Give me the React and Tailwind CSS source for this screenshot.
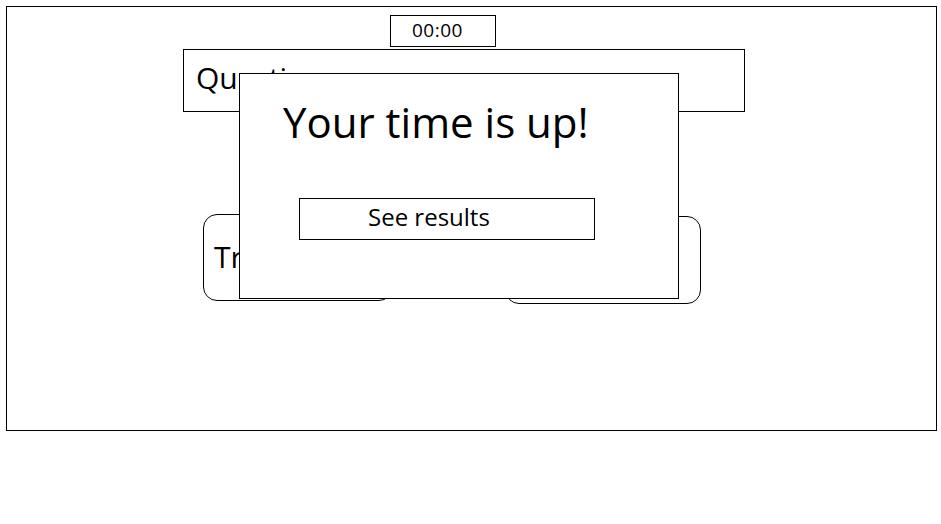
import React from "react";

export default function App() {
  return (
    <div className="bg-white w-[941px] h-[524px] p-[6px] text-black" style={{ fontFamily: '"Open Sans", "Noto Sans", sans-serif' }}>
      <div className="relative w-[931px] h-[425px] border border-black flex flex-col items-start">
        <div className="mt-[8px] ml-[383px] w-[106px] h-[32px] border border-black pt-[5px] pl-[21px] text-[19px] leading-none tracking-[0.5px]">
          00:00
        </div>
        <div className="mt-[2px] ml-[176px] w-[562px] h-[63px] border border-black pt-[13px] pl-[12px] text-[30px] leading-none">
          Question
        </div>
        <div className="mt-[102px] ml-[196px] flex items-start">
          <div className="w-[190px] h-[87px] border border-black rounded-[14px] pt-[27px] pl-[10px] text-[30px] leading-none">
            True
          </div>
          <div className="mt-[2px] ml-[112px] w-[196px] h-[88px] border border-black rounded-[14px] pt-[26px] pl-[10px] text-[30px] leading-none">
            False
          </div>
        </div>

        <div className="absolute left-[232px] top-[66px] w-[440px] h-[226px] bg-white border border-black flex flex-col items-start">
          <h1 className="mt-[27px] ml-[43px] text-[42px] leading-none font-normal whitespace-nowrap">
            Your time is up!
          </h1>
          <button className="mt-[55px] ml-[59px] w-[296px] h-[42px] border border-black bg-white pt-[5px] pb-[10px] pl-[68px] text-left text-[24px] leading-none self-start">
            See results
          </button>
        </div>
      </div>
    </div>
  );
}
